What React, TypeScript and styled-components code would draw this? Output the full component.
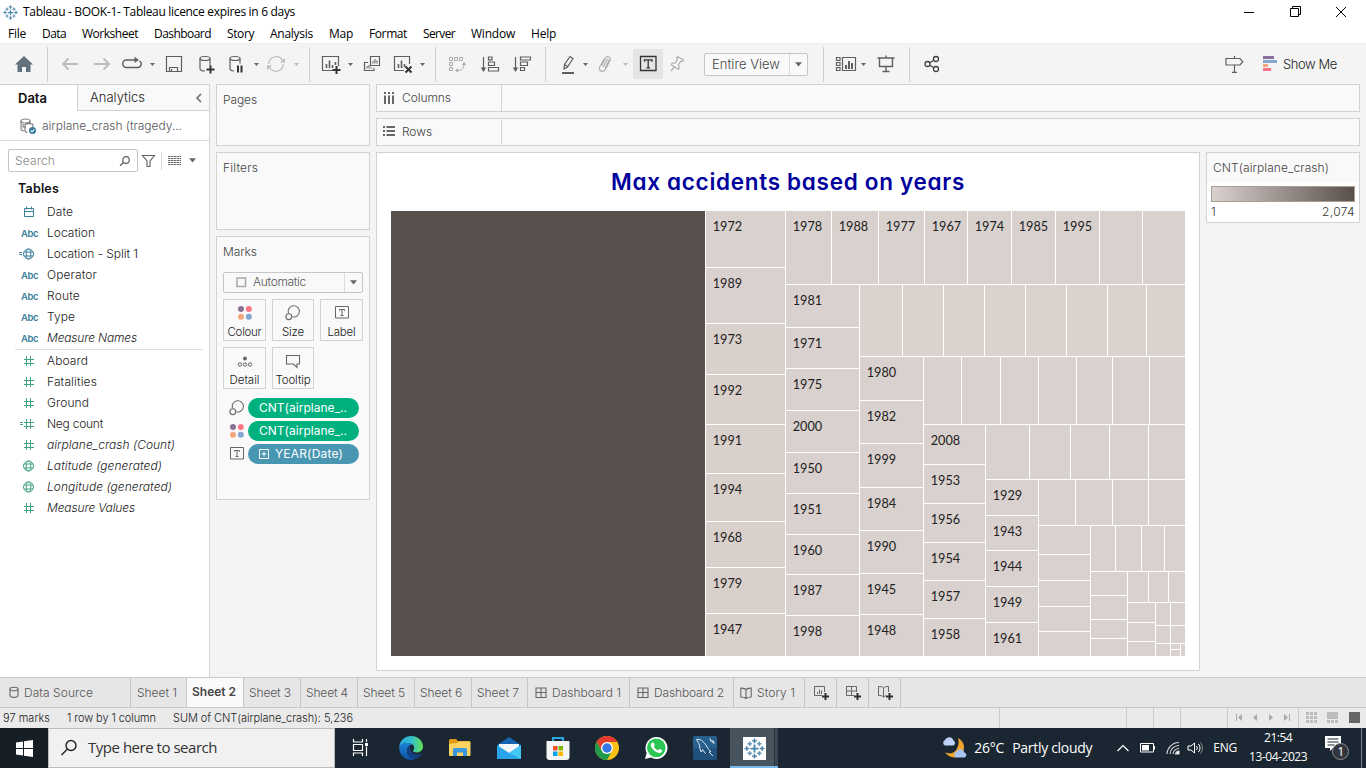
import React, { useLayoutEffect, useRef, useState } from "react";
import styled, { createGlobalStyle, css } from "styled-components";

const UI = `Inter, Roboto, "Liberation Sans", sans-serif`;
const SYS = `"Open Sans", "Noto Sans", sans-serif`;
const LINE = "#d2d2d2";

const Global = createGlobalStyle`
  * { box-sizing: border-box; }
  body { margin: 0; background: #f4f4f4; overflow: hidden; font-family: ${UI}; font-size: 12px; color: #333; }
  svg { display: block; flex: none; }
`;

/* ---------- text whose tracking is tuned so that it fills a given width ---------- */
const Label = styled.span<{ $size?: number; $color?: string; $weight?: number; $italic?: boolean; $sys?: boolean; $round?: boolean }>`
  display: inline-block;
  flex: none;
  white-space: pre;
  line-height: 1.3;
  font-family: ${(p) => (p.$sys ? SYS : UI)};
  font-size: ${(p) => p.$size ?? 12}px;
  color: ${(p) => p.$color ?? "#222"};
  font-weight: ${(p) => p.$weight ?? (p.$sys ? 400 : 300)};
  font-style: ${(p) => (p.$italic ? "italic" : "normal")};
  ${(p) => p.$round && css`font-feature-settings: "cv11";`}
`;

type FitProps = { w: number; children: string; size?: number; color?: string; weight?: number; italic?: boolean; sys?: boolean; round?: boolean };
function Fit({ w, children, size, color, weight, italic, sys, round }: FitProps) {
  const ref = useRef<HTMLSpanElement>(null);
  const [track, setTrack] = useState(0);
  useLayoutEffect(() => {
    const el = ref.current;
    if (!el) return;
    el.style.letterSpacing = "0px";
    setTrack((w - el.getBoundingClientRect().width) / children.length);
  }, [w, children]);
  return (
    <Label ref={ref} $size={size} $color={color} $weight={weight} $italic={italic} $sys={sys} $round={round} style={{ letterSpacing: `${track}px` }}>
      {children}
    </Label>
  );
}

/* ---------- frame ---------- */
const Screen = styled.div`width: 1366px; height: 768px; display: flex; flex-direction: column; overflow: hidden; background: #f4f4f4;`;
const TitleBar = styled.header`height: 23px; flex: none; background: #fff; display: flex; align-items: center; padding-left: 3px;`;
const AppName = styled.div`flex: 1; display: flex; align-items: center; gap: 5px; padding-top: 1px;`;
const WinButton = styled.div`width: 46px; height: 22px; display: flex; align-items: center; justify-content: center;`;
const MenuBar = styled.nav`height: 20px; flex: none; background: #fff; display: flex; align-items: center; gap: 16px; padding: 2px 0 0 8px;`;
const Toolbar = styled.div`height: 41px; flex: none; background: #f4f4f4; border-top: 1px solid #ededed; display: flex; align-items: center;`;
const Tool = styled.div<{ $w: number; $on?: boolean }>`
  width: ${(p) => p.$w}px; height: 30px; flex: none; display: flex; align-items: center; justify-content: center;
  background: ${(p) => (p.$on ? "#e5e5e5" : "transparent")};
`;
const Gap = styled.div<{ $w: number }>`width: ${(p) => p.$w}px; flex: none;`;
const Rule = styled.div`width: 1px; height: 35px; background: #d0d0d0; flex: none;`;
const Grow = styled.div`flex: 1;`;
const Select = styled.div<{ $w: number; $h: number; $drop: number; $pad: number }>`
  width: ${(p) => p.$w}px; height: ${(p) => p.$h}px; border: 1px solid #c6c6c6; border-radius: 2px; background: #f9f9f9;
  display: flex; align-items: center; padding-left: ${(p) => p.$pad}px; flex: none;
  & > :last-child { margin-left: auto; width: ${(p) => p.$drop}px; height: 100%; border-left: 1px solid #dcdcdc; display: flex; align-items: center; justify-content: center; }
`;
const ShowMe = styled.div`display: flex; align-items: center; gap: 6px; margin: 0 29px 0 16px;`;

const Main = styled.main`height: 593px; flex: none; display: flex;`;

/* ---------- data pane ---------- */
const DataPane = styled.aside`width: 210px; flex: none; background: #fff; border-right: 1px solid ${LINE}; border-top: 1px solid ${LINE};`;
const PaneTabs = styled.div`display: flex; height: 26px;`;
const DataTab = styled.div`width: 77px; padding-left: 18px; display: flex; align-items: center;`;
const AnalyticsTab = styled.div`flex: 1; background: #f9f9f9; border: solid ${LINE}; border-width: 0 0 1px 1px; padding: 0 6px 0 12px; display: flex; align-items: center; justify-content: space-between;`;
const Source = styled.div`height: 30px; border-bottom: 1px solid #dcdcdc; display: flex; align-items: center; padding-left: 18px; gap: 5px;`;
const SearchRow = styled.div`display: flex; align-items: center; height: 24px; margin-top: 8px; padding: 0 0 1px 8px;`;
const SearchBox = styled.div`width: 130px; height: 23px; border: 1px solid #c4c4c4; border-radius: 2px; display: flex; align-items: center; justify-content: space-between; padding: 0 6px;`;
const SearchRule = styled.div`width: 1px; height: 18px; background: #d6d6d6; margin: 0 6px 0 5px;`;
const Heading = styled.div`height: 28px; padding: 4px 0 0 18px; display: flex; align-items: center;`;
const Field = styled.div`height: 21px; display: flex; align-items: center; padding-left: 17px;`;
const FieldIcon = styled.div`width: 30px; height: 21px; display: flex; align-items: center; flex: none;`;
const Abc = styled.span`font: 600 9.5px ${UI}; color: #3d7f9c; padding: 1px 0 0 4px; letter-spacing: -0.4px;`;
const FieldRule = styled.div`height: 1px; margin: 1px 6px 0 15px; background: #dcdcdc;`;

/* ---------- cards ---------- */
const Cards = styled.section`width: 154px; margin-left: 6px; display: flex; flex-direction: column; gap: 6px;`;
const Card = styled.div<{ $h: number }>`height: ${(p) => p.$h}px; flex: none; background: #f9f9f9; border: 1px solid ${LINE}; padding: 7px 6px;`;
const MarkGrid = styled.div`display: grid; grid-template-columns: 43px 42px 43px; column-gap: 6px; row-gap: 6px; margin-top: 6px;`;
const MarkButton = styled.div`height: 42px; border: 1px solid ${LINE}; display: flex; flex-direction: column; align-items: center; justify-content: space-between; padding: 3px 0 0;`;
const MarksSelect = styled.div`margin-top: 12px;`;
const Slot = styled.div`width: 16px; height: 20px; flex: none; display: flex; align-items: center; justify-content: center;`;
const Pills = styled.div`display: flex; flex-direction: column; gap: 3px; margin-top: 9px;`;
const PillRow = styled.div`display: flex; align-items: center; height: 20px; padding-left: 6px; gap: 3px;`;
const Pill = styled.div<{ $c: string }>`width: 111px; height: 20px; border-radius: 10px; background: ${(p) => p.$c}; display: flex; align-items: center; padding-left: 11px; gap: 6px;`;

/* ---------- worksheet ---------- */
const Work = styled.section`width: 984px; margin-left: 6px; display: flex; flex-direction: column; gap: 6px;`;
const Shelf = styled.div`height: 28px; flex: none; border: 1px solid ${LINE}; background: #f9f9f9; display: flex;`;
const ShelfName = styled.div`width: 125px; border-right: 1px solid ${LINE}; display: flex; align-items: center; padding-left: 6px; gap: 6px;`;
const ViewRow = styled.div`display: flex; gap: 6px; align-items: flex-start;`;
const View = styled.div`width: 824px; height: 519px; background: #fff; border: 1px solid ${LINE}; padding-left: 14px;`;
const ViewTitle = styled.div`height: 58px; width: 794px; display: flex; align-items: center; justify-content: center;`;
const Legend = styled.div`width: 154px; height: 71px; border: 1px solid ${LINE}; background: #fff;`;
const LegendName = styled.div`height: 29px; background: #f9f9f9; display: flex; align-items: center; padding-left: 6px;`;
const Ramp = styled.div`height: 16px; margin: 4px 4px 0; border: 1px solid #a8a095; background: linear-gradient(90deg, #dad2cf, #594f4b);`;
const RampEnds = styled.div`display: flex; justify-content: space-between; padding: 2px 4px 0;`;

/* ---------- bottom ---------- */
const SheetTabs = styled.div`height: 31px; flex: none; border: solid #cacaca; border-width: 1px 0; background: #e6e6e6; display: flex;`;
const SheetTab = styled.div<{ $w: number; $on?: boolean; $pad: number }>`
  width: ${(p) => p.$w}px; flex: none; border-right: 1px solid #c6c6c6; padding-left: ${(p) => p.$pad}px; display: flex; align-items: center; gap: 5px;
  background: ${(p) => (p.$on ? "#fafafa" : "transparent")}; padding-bottom: ${(p) => (p.$on ? 2 : 0)}px;
`;
const Status = styled.div`height: 20px; flex: none; background: #eaeaea; display: flex; align-items: center; padding-left: 3px; gap: 17px;`;
const StatusCell = styled.div<{ $w: number }>`width: ${(p) => p.$w}px; height: 20px; border-left: 1px solid #cbcbcb; display: flex; align-items: center; justify-content: center; gap: 6px; padding-bottom: 1px;`;
const StatusCells = styled.div`margin-left: auto; display: flex;`;
const Taskbar = styled.footer`height: 40px; flex: none; background: #1a2631; display: flex; align-items: center; color: #fff;`;
const Task = styled.div<{ $w: number; $on?: boolean; $dark?: boolean }>`
  width: ${(p) => p.$w}px; height: 40px; flex: none; display: flex; align-items: center; justify-content: center;
  background: ${(p) => (p.$on ? "linear-gradient(90deg,#47535d 44px,#28343d 44px,#28343d 45px,#3b4750 45px)" : p.$dark ? "#161e26" : "transparent")};
  ${(p) => p.$on && css`border-bottom: 2px solid #76b9ed; padding-top: 2px;`}
`;
const TaskSearch = styled.div`width: 288px; height: 40px; background: #f1f1f1; border: 1px solid #bcbcbc; display: flex; align-items: center; padding-left: 11px; gap: 10px;`;
const Clock = styled.div`width: 66px; height: 40px; display: flex; flex-direction: column; align-items: center; justify-content: center; gap: 3px; padding-bottom: 1px;`;
const Peek = styled.div`width: 1px; height: 40px; background: #77818a; margin: 0 4px 0 8px;`;
const Tile = styled.div`width: 23px; height: 23px; background: #fff; display: flex; align-items: center; justify-content: center;`;

/* ---------- icons ---------- */
type IconProps = { s?: number; h?: number; c?: string; sw?: number; children: React.ReactNode };
const Icon = ({ s = 24, h, c = "#5f5f5f", sw = 1.2, children }: IconProps) => (
  <svg width={s} height={h ?? s} viewBox={`0 0 ${s} ${h ?? s}`} fill="none" stroke={c} strokeWidth={sw}>{children}</svg>
);
const Caret = ({ w, c = "#666" }: { w: number; c?: string }) => (
  <Tool $w={w}><svg width="5" height="3"><path d="M0 0h5L2.5 3z" fill={c} /></svg></Tool>
);
const BigCaret = () => <svg width="7" height="5"><path d="M0 .3h7L3.5 4.6z" fill="#666" /></svg>;

const TableauMark = ({ s, c = "#35749c" }: { s: number; c?: string }) => (
  <svg width={s} height={s} viewBox="0 0 24 24" stroke={c} strokeWidth="1.8">
    <path d="M12 7.500v9M7.500 12h9" stroke="#3f87ae" strokeWidth="2" />
    <path d="M12 .5v5.500M9.300 3.200h5.400M12 18v5.500M9.300 20.800h5.400M3.200 9.300v5.400M.5 12h5.500M20.800 9.300v5.400M18 12h5.500" opacity=".85" />
    <path d="M6.500 4v5M4 6.500h5M17.500 4v5M15 6.500h5M6.500 15v5M4 17.500h5M17.500 15v5M15 17.500h5" opacity=".75" />
  </svg>
);
const Dots = () => (
  <svg width="16" height="16">
    <circle cx="4" cy="4" r="3" fill="#8b7397" /><circle cx="11.800" cy="4" r="3" fill="#f87886" />
    <circle cx="4" cy="11.800" r="3" fill="#f3a77c" /><circle cx="11.800" cy="11.800" r="3" fill="#84a7cf" />
  </svg>
);
const SizeIcon = () => (
  <Icon s={16} c="#6a6a6a" sw={1.1}><path d="M3.600 8.300A5.600 5.600 0 1 1 7.200 11.700" /><circle cx="3.800" cy="11.700" r="2.900" /></Icon>
);
const TextIcon = () => (
  <Icon s={14} h={13} c="#666" sw={1}><path d="M.5.5h13v11.500h-13z" /><path d="M4.500 4.800V3.500h5v1.300M7 3.500v6M5.500 9.500h3" /></Icon>
);
const Globe = ({ c, calc }: { c: string; calc?: boolean }) => (
  <Icon s={18} h={14} c={c} sw={1}>
    {calc && <path d="M2 5.500h3M2 7.500h3" />}
    <circle cx="11.500" cy="7" r="5" /><ellipse cx="11.500" cy="7" rx="2.300" ry="5" /><path d="M7 5h9M7 9h9" />
  </Icon>
);
const Hash = ({ calc }: { calc?: boolean }) => (
  <Icon s={18} h={14} c="#43a383" sw={1}>
    {calc && <path d="M3 5.500h3M3 7.500h3" />}
    <path d="M9.500 2v10M13.500 2v10M7 5.500h10M7 9.500h10" />
  </Icon>
);
const Calendar = () => <Icon s={18} h={14} c="#3d7f9c" sw={1}><path d="M7.500 3.500h9v8h-9zM7.500 6.500h9M9.500 1.500v3M14.500 1.500v3" /></Icon>;
const Plus = ({ x, y, r = 4 }: { x: number; y: number; r?: number }) => <path d={`M${x - r} ${y}h${2 * r}M${x} ${y - r}v${2 * r}`} stroke="#333" strokeWidth="2" />;
const DashIcon = () => <Icon s={12} c="#666" sw={1.1}><path d="M1 1h10v9.500H1zM6 1v9.500M1 5.500h10" /></Icon>;
const StoryIcon = () => <Icon s={12} c="#666" sw={1.1}><path d="M6 2.500C4.500 1 3 1.200.8 1v9C3 10 4.500 10 6 11.500C7.500 10 9 10 11.200 10V1C9 1.200 7.500 1 6 2.500zM6 2.500v9" /></Icon>;

/* ---------- tree map ---------- */
type Cell = { x0: number; y0: number; x1: number; y1: number; year?: string; tone: string };
const RIGHT = 794, BOTTOM = 445;
const cells: Cell[] = [{ x0: 0, y0: 0, x1: 314, y1: BOTTOM, tone: "#594f4c" }];
const column = (x0: number, x1: number, y0: number, cuts: number[], years: string[] = []) => {
  const ends = [...cuts, BOTTOM];
  ends.forEach((y1, i) => cells.push({ x0, x1, y0: i ? ends[i - 1] + 1 : y0, y1, year: years[i], tone: x0 < 390 && i > 1 ? "#d9d0cb" : "#d9d1ce" }));
};
const strip = (y0: number, y1: number, x0: number, cuts: number[], years: string[] = [], tone = "#d9d1ce") => {
  const ends = [...cuts, RIGHT];
  ends.forEach((x1, i) => cells.push({ x0: i ? ends[i - 1] + 1 : x0, x1, y0, y1, year: years[i], tone }));
};
column(315, 394, 0, [56, 112, 163, 213, 262, 310, 356, 402], ["1972", "1989", "1973", "1992", "1991", "1994", "1968", "1979", "1947"]);
strip(0, 73, 395, [440, 487, 533, 576, 620, 664, 708, 751], ["1978", "1988", "1977", "1967", "1974", "1985", "1995"]);
column(395, 468, 74, [116, 157, 199, 241, 282, 323, 363, 404], ["1981", "1971", "1975", "2000", "1950", "1951", "1960", "1987", "1998"]);
strip(74, 145, 469, [511, 552, 593, 634, 675, 716, 755], [], "#dad2cd");
column(469, 532, 146, [189, 232, 276, 319, 362, 403], ["1980", "1982", "1999", "1984", "1990", "1945", "1948"]);
strip(146, 213, 533, [570, 609, 647, 685, 721, 758]);
column(533, 594, 214, [253, 292, 331, 369, 407], ["2008", "1953", "1956", "1954", "1957", "1958"]);
strip(214, 268, 595, [638, 679, 718, 757]);
column(595, 647, 269, [304, 339, 375, 411], ["1929", "1943", "1944", "1949", "1961"]);
strip(269, 314, 648, [684, 721, 757]);
column(648, 699, 315, [343, 369, 395, 420]);
strip(315, 360, 700, [724, 750, 773]);
column(700, 736, 361, [384, 408, 427]);
strip(361, 391, 737, [757, 777]);
column(737, 764, 392, [411, 430]);
strip(392, 414, 765, [779]);
strip(415, 432, 765, [779]);
strip(433, BOTTOM, 765, [779, 789]);

const TreeMap = () => (
  <svg width={RIGHT} height={BOTTOM} fontFamily="Lato, sans-serif" fontSize="12.7">
    {cells.map((c, i) => <rect key={i} x={c.x0} y={c.y0} width={c.x1 - c.x0} height={c.y1 - c.y0} fill={c.tone} />)}
    <path d="M780 438.500h9" stroke="#fff" />
    {cells.filter((c) => c.year).map((c) => <text key={c.year} x={c.x0 + 6.700} y={c.y0 + 20.400} fill="#222">{c.year}</text>)}
  </svg>
);

/* ---------- content ---------- */
const menus: [string, number][] = [["File", 18], ["Data", 24], ["Worksheet", 56], ["Dashboard", 57], ["Story", 27], ["Analysis", 43], ["Map", 24], ["Format", 38], ["Server", 32], ["Window", 44], ["Help", 25]];
const abc = <Abc>Abc</Abc>;
const dims: [React.ReactNode, string, number, boolean?][] = [
  [<Calendar />, "Date", 26], [abc, "Location", 48], [<Globe c="#3d7f9c" calc />, "Location - Split 1", 91], [abc, "Operator", 50],
  [abc, "Route", 33], [abc, "Type", 28], [abc, "Measure Names", 90, true],
];
const measures: [React.ReactNode, string, number, boolean?][] = [
  [<Hash />, "Aboard", 41], [<Hash />, "Fatalities", 50], [<Hash />, "Ground", 42], [<Hash calc />, "Neg count", 56],
  [<Hash />, "airplane_crash (Count)", 128, true], [<Globe c="#43a383" />, "Latitude (generated)", 115, true],
  [<Globe c="#43a383" />, "Longitude (generated)", 125, true], [<Hash />, "Measure Values", 88, true],
];
const FieldList = ({ items }: { items: typeof dims }) => (
  <>{items.map(([icon, name, w, it]) => <Field key={name}><FieldIcon>{icon}</FieldIcon><Fit w={w} italic={it}>{name}</Fit></Field>)}</>
);

const Tools = () => (
  <Toolbar>
    <Tool $w={47}><svg width="18" height="16"><path d="M9 0L18 8.500H15.500V16H11V11H7V16H2.500V8.500H0z" fill="#63717f" /></svg></Tool>
    <Rule /><Gap $w={6} />
    <Tool $w={32}><Icon c="#bbb" sw={1.8}><path d="M20 12H5M10.500 6.500L5 12l5.500 5.500" /></Icon></Tool>
    <Tool $w={32}><Icon c="#bbb" sw={1.8}><path d="M4 12h15M13.500 6.500L19 12l-5.500 5.500" /></Icon></Tool>
    <Tool $w={28}><Icon sw={1.4}><path d="M16 8H6.500a3.500 3.500 0 0 0 0 7.500h11a3.500 3.500 0 0 0 2-6.500" /><path d="M14.500 4.800L19 8l-4.500 3z" fill="#5f5f5f" stroke="none" /></Icon></Tool>
    <Caret w={12} />
    <Tool $w={32}><Icon><path d="M4.500 4.500h15v15h-15zM7.500 19.500v-4h8v4M9.500 19v-2" /></Icon></Tool>
    <Tool $w={32}><Icon><ellipse cx="11" cy="6.500" rx="5" ry="2" /><path d="M6 6.500v10c0 1.500 2 2.500 5 2.500M16 6.500v7" /><Plus x={16.500} y={17.500} /></Icon></Tool>
    <Tool $w={28}><Icon><ellipse cx="11" cy="6.500" rx="5" ry="2" /><path d="M6 6.500v10c0 1.500 1.500 2.300 4 2.500M16 6.500v5" /><path d="M14 13.500v7M17.500 13.500v7" stroke="#333" strokeWidth="2" /></Icon></Tool>
    <Caret w={12} />
    <Tool $w={28}><Icon c="#bbb"><path d="M4.800 12a7.200 7.200 0 0 1 13.500-3.500M19.200 12a7.200 7.200 0 0 1-13.500 3.500" /><path d="M21 6v4.500h-5zM3 18v-4.500h5z" fill="#bbb" stroke="none" /></Icon></Tool>
    <Caret w={12} c="#bbb" />
    <Gap $w={7} /><Rule /><Gap $w={7} />
    <Tool $w={27}><Icon><path d="M14 18.500H3.500v-14h16V14" /><path d="M7.500 16v-4M10.500 16V8.500M13.500 16v-3M16.500 13v-3" strokeWidth="1.600" /><Plus x={17.500} y={18} /></Icon></Tool>
    <Caret w={12} />
    <Tool $w={31}><Icon><path d="M10.500 4.500h9v9h-9zM8 10.500H4.500v8h9.500V16" /><path d="M13 11.500V9M15 11.500V7M17 11.500V8.500M7 16.500v-2.500M9 16.500v-3.500M11 16.500V15" strokeWidth="1" /></Icon></Tool>
    <Tool $w={31}><Icon><path d="M13 18.500H3.500v-14h15V12" /><path d="M7.500 16v-4M10.500 16V8.500M13.500 15v-3" strokeWidth="1.600" /><path d="M14.500 14.500l6 6M20.500 14.500l-6 6" stroke="#333" strokeWidth="2" /></Icon></Tool>
    <Caret w={9} />
    <Gap $w={8} /><Rule /><Gap $w={5} />
    <Tool $w={32}><Icon c="#aaa" sw={1}><path d="M4.500 5.500h3v3h-3zM9.500 5.500h3v3h-3zM14.500 5.500h3v3h-3zM4.500 10.500h3v3h-3zM4.500 15.500h3v3h-3z" /><path d="M19 11.500c0 5-2 7-6.500 7" /><path d="M16.800 13l2.200-3 2.200 3zM13 16.300L10 18.500l3 2.200z" fill="#aaa" stroke="none" /></Icon></Tool>
    <Tool $w={33}><Icon><path d="M5.500 5v12" /><path d="M2.800 15.500h5.400L5.500 20z" fill="#5f5f5f" stroke="none" /><path d="M10.500 5h3.500v2.800h-3.500zM10.500 10h6v3.500h-6zM10.500 15.500h10v3.500h-10z" /></Icon></Tool>
    <Tool $w={32}><Icon><path d="M5.500 5v12" /><path d="M2.800 15.500h5.400L5.500 20z" fill="#5f5f5f" stroke="none" /><path d="M10.500 5h10v3h-10zM10.500 10h7v3.500h-7zM10.500 15.500h4v3h-4z" /></Icon></Tool>
    <Gap $w={7} /><Rule /><Gap $w={8} />
    <Tool $w={28}><Icon><path d="M8 17l.5-4.500 5.500-8 3 2L11.500 15zM8.500 12.500l3 2" /><path d="M6 21h12" strokeWidth="2" /></Icon></Tool>
    <Caret w={7} />
    <Tool $w={32}><Icon c="#b0b0b0"><path d="M8.500 13.500l4-7.500a2.600 2.600 0 0 1 4.600 2.400l-5 9.300a3 3 0 0 1-5.300-2.900l4.700-8.300M12 16l3.500-6.800a1 1 0 0 0-1.900-1L10 15" /></Icon></Tool>
    <Caret w={8} c="#bbb" />
    <Gap $w={4} />
    <Tool $w={30} $on><Icon c="#333" sw={1.3}><path d="M4.500 4.500h15.500v14h-15.500z" /><path d="M8.500 9.800V7.800h7.500v2M12.200 7.800v8M10.500 15.800h3.500" /></Icon></Tool>
    <Tool $w={28}><Icon c="#b0b0b0"><path d="M12.500 4.500l6 3.500-.8 1.500-1.700-.3-2.500 3.300.8 3.500-1.100 1.200-7-4.500.8-1.500 3.300-.3 2.200-3.400-.8-1.500zM9.300 15L6 19" /></Icon></Tool>
    <Gap $w={13} />
    <Select $w={104} $h={23} $drop={18} $pad={7}><Fit w={68} size={13} color="#444">Entire View</Fit><div><BigCaret /></div></Select>
    <Gap $w={15} /><Rule /><Gap $w={8} />
    <Tool $w={28}><Icon><path d="M2.500 5.500h3.500v3h-3.500zM2.500 10.500h3.500v3h-3.500zM2.500 15.500h3.500v3h-3.500zM8.500 5.500h13v13h-13z" /><path d="M12 17v-4M15 17V9M18 17v-6" strokeWidth="2" /></Icon></Tool>
    <Caret w={7} />
    <Tool $w={37}><Icon><path d="M3.500 6h17M5.500 6v8.500h13V6M12 3.500V6M12 14.500V19M8.500 19.500h7" strokeWidth="1.400" /></Icon></Tool>
    <Gap $w={5} /><Rule /><Gap $w={6} />
    <Tool $w={32}><Icon c="#444" sw={1.3}><circle cx="7.500" cy="12" r="2.500" /><circle cx="16" cy="7" r="2.500" /><circle cx="16" cy="17" r="2.500" /><path d="M9.700 10.700l4.100-2.400M9.700 13.300l4.100 2.400" /></Icon></Tool>
    <Grow />
    <Icon><path d="M3 6.500h14l2.800 3.200-2.800 3.300H3zM11.500 4v2.500M11.500 13v7M9 20.300h5" /></Icon>
    <ShowMe>
      <svg width="14" height="15"><path d="M0 0h11v3H0z" fill="#86729a" /><path d="M0 4h14v3H0z" fill="#84a7cf" /><path d="M0 8h5v3H0z" fill="#f3a77c" /><path d="M0 12h8v3H0z" fill="#f87080" /></svg>
      <Fit w={54} size={13}>Show Me</Fit>
    </ShowMe>
  </Toolbar>
);

const Pane = () => (
  <DataPane>
    <PaneTabs>
      <DataTab><Fit w={29} size={13} weight={600} color="#111">Data</Fit></DataTab>
      <AnalyticsTab><Fit w={55} size={13}>Analytics</Fit><Icon s={8} h={10} sw={1.4}><path d="M6 1L2 5l4 4" /></Icon></AnalyticsTab>
    </PaneTabs>
    <Source>
      <Icon s={19} h={18} c="#777" sw={1.1}>
        <ellipse cx="7.500" cy="4" rx="4.500" ry="2" /><path d="M3 4v8c0 1 1.500 2 3 2M5 7v3h3M12 4v2M7 8.500c0-2.500 8-2.500 8 0v2M7 8.500v5c0 1 1 1.800 2.500 2" />
        <circle cx="14.500" cy="13.500" r="3.500" fill="#35789b" stroke="none" /><path d="M12.800 13.500l1.300 1.300 2.200-2.500" stroke="#fff" />
      </Icon>
      <Fit w={140} color="#555">airplane_crash (tragedy...</Fit>
    </Source>
    <SearchRow>
      <SearchBox><Fit w={40} color="#888">Search</Fit><Icon s={12} sw={1.2}><circle cx="7" cy="5" r="3.300" /><path d="M4.700 7.300L1 10.800" /></Icon></SearchBox>
      <Gap $w={3} />
      <Icon s={15} h={14} sw={1.1}><path d="M1.500 1.500h12L9 7v5.500H6V7z" /></Icon>
      <SearchRule />
      <Icon s={13} h={12} c="#666" sw={1}><path d="M0 1.500h13M0 3.500h13M0 5.500h13M0 7.500h13M0 9.500h13" strokeDasharray="2.500 .5" /></Icon>
      <Gap $w={8} /><BigCaret />
    </SearchRow>
    <Heading><Fit w={41} size={12.5} weight={600} color="#111">Tables</Fit></Heading>
    <FieldList items={dims} />
    <FieldRule />
    <FieldList items={measures} />
  </DataPane>
);

const MarksCard = () => (
  <Card $h={264}>
    <Fit w={34} color="#444">Marks</Fit>
    <MarksSelect>
      <Select $w={140} $h={21} $drop={18} $pad={12}>
        <Icon s={11} c="#aaa" sw={1.6}><path d="M1 1h8.500v8.500h-8.500z" /></Icon><Gap $w={6} />
        <Fit w={53} color="#555">Automatic</Fit><div><BigCaret /></div>
      </Select>
    </MarksSelect>
    <MarkGrid>
      <MarkButton><Slot><Dots /></Slot><Fit w={34} size={11.5}>Colour</Fit></MarkButton>
      <MarkButton><Slot><SizeIcon /></Slot><Fit w={22} size={11.500}>Size</Fit></MarkButton>
      <MarkButton><Slot><TextIcon /></Slot><Fit w={28} size={11.500}>Label</Fit></MarkButton>
      <MarkButton><Slot><Icon s={16} c="#666" sw={1}><circle cx="8" cy="5.500" r="2" fill="#666" stroke="none" /><circle cx="3" cy="11.500" r="1.700" /><circle cx="8" cy="11.500" r="1.700" /><circle cx="13" cy="11.500" r="1.700" /></Icon></Slot><Fit w={30} size={11.500}>Detail</Fit></MarkButton>
      <MarkButton><Slot><Icon s={16} c="#666" sw={1.1}><path d="M1.500 2.500h13v8.500h-2.500v3.500L8.500 11h-7z" /></Icon></Slot><Fit w={35} size={11.500}>Tooltip</Fit></MarkButton>
    </MarkGrid>
    <Pills>
      <PillRow><Slot><SizeIcon /></Slot><Pill $c="#00b180"><Fit w={88} weight={400} color="#fff">CNT(airplane_..</Fit></Pill></PillRow>
      <PillRow><Slot><Dots /></Slot><Pill $c="#00b180"><Fit w={88} weight={400} color="#fff">CNT(airplane_..</Fit></Pill></PillRow>
      <PillRow><Slot><TextIcon /></Slot><Pill $c="#4996b2"><Icon s={10} c="#fff" sw={1}><path d="M.5.5h9v9h-9zM5 2.500v5M2.500 5h5" /></Icon><Fit w={68} weight={400} color="#fff">YEAR(Date)</Fit></Pill></PillRow>
    </Pills>
  </Card>
);

const ViewArea = () => (
  <Work>
    <Shelf><ShelfName><Icon s={13} h={14} c="#666" sw={2}><path d="M2 1v2M6 1v2M10 1v2M2 4.500V13M6 4.500V13M10 4.500V13" /></Icon><Fit w={49} color="#444">Columns</Fit></ShelfName></Shelf>
    <Shelf><ShelfName><Icon s={13} h={12} c="#666" sw={2}><path d="M0 1h2M0 5h2M0 9h2M3.500 1H12M3.500 5H12M3.500 9H12" /></Icon><Fit w={30} color="#444">Rows</Fit></ShelfName></Shelf>
    <ViewRow>
      <View>
        <ViewTitle><Fit w={354} size={22.5} weight={600} color="#00009c" round>Max accidents based on years</Fit></ViewTitle>
        <TreeMap />
      </View>
      <Legend>
        <LegendName><Fit w={116} color="#444">CNT(airplane_crash)</Fit></LegendName>
        <Ramp />
        <RampEnds><Fit w={7} color="#333">1</Fit><Fit w={33} color="#333">2,074</Fit></RampEnds>
      </Legend>
    </ViewRow>
  </Work>
);

const Tabs = () => (
  <SheetTabs>
    <SheetTab $w={131} $pad={9}><Icon s={10} h={13} c="#666" sw={1.1}><ellipse cx="5" cy="3" rx="4" ry="1.800" /><path d="M1 3v6.500C1 12 9 12 9 9.500V3" /></Icon><Fit w={69} color="#555">Data Source</Fit></SheetTab>
    <SheetTab $w={56} $pad={6}><Fit w={40} color="#555">Sheet 1</Fit></SheetTab>
    <SheetTab $w={57} $pad={5} $on><Fit w={44} weight={600} color="#444">Sheet 2</Fit></SheetTab>
    {[3, 4, 5, 6, 7].map((n) => <SheetTab key={n} $w={n === 7 ? 56 : 57} $pad={5}><Fit w={42} color="#555">{`Sheet ${n}`}</Fit></SheetTab>)}
    <SheetTab $w={102} $pad={7}><DashIcon /><Fit w={69} color="#555">Dashboard 1</Fit></SheetTab>
    <SheetTab $w={104} $pad={7}><DashIcon /><Fit w={70} color="#555">Dashboard 2</Fit></SheetTab>
    <SheetTab $w={71} $pad={6}><StoryIcon /><Fit w={38} color="#555">Story 1</Fit></SheetTab>
    <SheetTab $w={32} $pad={8}><Icon s={18} h={16} c="#666" sw={1}><path d="M11.500 1.500h-10v9H9M11.500 1.500V7M4.500 9V7M6.500 9V4.500M8.500 9V5.500" /><Plus x={12.500} y={11.500} r={3.500} /></Icon></SheetTab>
    <SheetTab $w={32} $pad={8}><Icon s={18} h={16} c="#666" sw={1}><path d="M11.500 7V1.500h-10v9H9M1.500 6h10M6.500 1.500v9" /><Plus x={12.500} y={11.500} r={3.500} /></Icon></SheetTab>
    <SheetTab $w={32} $pad={8}><Icon s={18} h={16} c="#666" sw={1}><path d="M6.500 3C5 1.500 3.500 1.500 1.500 1.500v9c2 0 3.500 0 5 1.500zM6.500 3C8 1.500 9.500 1.500 11.500 1.500V7M6.500 12l2.500-1.500" /><Plus x={12.500} y={11.500} r={3.500} /></Icon></SheetTab>
  </SheetTabs>
);

const StatusBar = () => (
  <Status>
    <Fit w={47} size={11}>97 marks</Fit><Fit w={89} size={11}>1 row by 1 column</Fit><Fit w={180} size={11}>SUM of CNT(airplane_crash): 5,236</Fit>
    <StatusCells>
      <StatusCell $w={127} /><StatusCell $w={27} /><StatusCell $w={27} /><StatusCell $w={47} />
      <StatusCell $w={71}>
        <svg width="54" height="7" fill="#aaa"><path d="M0 0h1v7H0zM6 0v7L2 3.500zM21 0v7L17 3.500zM33 0v7l4-3.500zM48 0v7l4-3.500zM53 0h1v7h-1z" /></svg>
      </StatusCell>
      <StatusCell $w={68}>
        <svg width="54" height="11"><path d="M0 1.500h11M0 5.500h11M0 9.500h11" stroke="#bcbcbc" strokeWidth="3" strokeDasharray="3 1" /><path d="M21 0h11v7H21zM21 8h3v3h-3zM25 8h3v3h-3zM29 8h3v3h-3z" fill="#bcbcbc" /><path d="M43 0h11v11H43z" fill="#666" /></svg>
      </StatusCell>
    </StatusCells>
  </Status>
);

const Edge = () => (
  <svg width="24" height="24" viewBox="0 0 24 24">
    <defs>
      <linearGradient id="e1" x1="0" x2="1"><stop offset="0" stopColor="#2aa6e6" /><stop offset=".55" stopColor="#35c1c8" /><stop offset="1" stopColor="#66e052" /></linearGradient>
      <linearGradient id="e2" x1="0" x2="0" y2="1"><stop offset="0" stopColor="#1a84d8" /><stop offset="1" stopColor="#0f4f9e" /></linearGradient>
    </defs>
    <path d="M.2 11C1 4 6 0 12 0c7 0 12 5 12 10.500 0 4-3.500 6-6.500 6-2 0-3.500-.8-3.500-1.500 0-.6 1.200-1.300 1.200-3.200C15.200 9 12 7 8.500 7 4.500 7 1.500 8.800.2 11z" fill="url(#e1)" />
    <path d="M.2 11C1.500 8.500 5 7 8.500 7c1.800 0 3.500.5 4.700 1.400C10 8.500 8 11.500 8 14.500c0 4.500 4 8 8.500 8-1.300 1-3 1.500-4.500 1.500C5 24 0 18.500.2 11z" fill="url(#e2)" />
    <path d="M8 14.500c0-2.200 1-4.300 3-5.300-.8 4.800 2.500 9.300 7.500 9.300 1.500 0 2.800-.4 4-1 .4-.2.700.1.400.5-1.500 2.500-3.800 4.300-6.400 4.500C12 22.500 8 19 8 14.500z" fill="#123f80" />
  </svg>
);

const Windows = () => (
  <Taskbar>
    <Task $w={48} $dark><svg width="17" height="17"><path d="M0 2.500L7 1.500V8H0zM8 1.300L17 0v8H8zM0 9h7v6.500L0 14.500zM8 9h9v8l-9-1.300z" fill="#fff" /></svg></Task>
    <TaskSearch><Icon s={18} c="#222" sw={1.4}><circle cx="11" cy="6.500" r="5" /><path d="M7.300 10.200L1.500 16" /></Icon><Fit w={129} size={15} sys color="#333">Type here to search</Fit></TaskSearch>
    <Task $w={50}><Icon s={18} c="#fff" sw={1.2}><path d="M2.500 0v3h9V0M2.500 5.500h9v6h-9zM2.500 17v-3h9v3M15.500 0v3M15.500 7.500V17" /><path d="M14 4h3v3h-3z" fill="#fff" stroke="none" /></Icon></Task>
    <Task $w={51}><Edge /></Task>
    <Task $w={48}><svg width="22" height="20"><path d="M0 2.500Q0 1 1.500 1H7l2 2h12v3H0z" fill="#e29c12" /><path d="M0 6L8 5l2-1.500h10.500q1 0 1 1V17q0 1-1 1H1q-1 0-1-1z" fill="#fdd462" /><path d="M4 18v-6.500q0-1.500 1.500-1.500h11q1.500 0 1.500 1.500V18h-4v-3.500H8V18z" fill="#3a96dd" /></svg></Task>
    <Task $w={50}><svg width="24" height="22"><path d="M0 8L12 0l12 8v14H0z" fill="#1565b0" /><path d="M2 7h20v6l-10 5L2 13z" fill="#f4f8fc" /><path d="M0 8l12 8 12-8v14H0z" fill="#2aa4ea" /><path d="M12 16L24 8v14z" fill="#46c8f5" /></svg></Task>
    <Task $w={48}><svg width="24" height="24"><path d="M7 6V2h10v4" fill="none" stroke="#29a8e0" strokeWidth="2" /><path d="M.5 5h23v16q0 3-3 3h-17q-3 0-3-3z" fill="#f5f5f5" /><path d="M7 10h4.500v4.500H7z" fill="#f05022" /><path d="M12.500 10H17v4.500h-4.500z" fill="#7fba00" /><path d="M7 15.500h4.500V20H7z" fill="#01a3ee" /><path d="M12.500 15.500H17V20h-4.500z" fill="#ffb800" /></svg></Task>
    <Task $w={50}><svg width="24" height="24"><circle cx="12" cy="12" r="12" fill="#fbc116" /><path d="M1.600 6A12 12 0 0 1 22.400 6H12L7 15z" fill="#e33b2e" /><path d="M1.600 6A12 12 0 0 0 12 24l5-9-5 3-5-3z" fill="#229a4a" /><circle cx="12" cy="12" r="6" fill="#fff" /><circle cx="12" cy="12" r="4.700" fill="#3577e5" /></svg></Task>
    <Task $w={48}><svg width="24" height="24"><path d="M1 23l1.700-6A11 11 0 1 1 7 21.500z" fill="#fff" /><circle cx="12.300" cy="11.800" r="9.300" fill="#2bc553" /><path d="M8.500 6.500c1.500-.6 1.800 1.500 2.200 2.300.3.700-1 1.500-.7 2 1 1.800 2.300 2.800 4 3.500.6.200 1.200-1.500 1.800-1.300 1 .4 2.600 1 2.400 1.800-.4 2-2.500 2.500-4 2C10.500 15.500 8.500 13.500 7 10.500c-.8-1.800.3-3.600 1.500-4z" fill="#fff" /></svg></Task>
    <Task $w={50}><svg width="24" height="24"><rect width="24" height="24" rx="2" fill="#275f8e" /><path d="M0 12h24v12H0z" fill="#1d4670" opacity=".6" /><path d="M3.500 3.500c3-1 7 1.500 10 6.500 2 3 2 4 4.500 5.500l-2 .5 4 4M3.500 3.500c1 2 2.500 3.500 3 6s.5 6 2 6.500l1-2.500 3 4" fill="none" stroke="#e4edf4" /><path d="M17 2.500l1 2.500 3 .5M18.500 5l3 2.500" stroke="#cfdde8" strokeWidth="1.300" fill="none" /></svg></Task>
    <Task $w={48} $on><Tile><TableauMark s={21} /></Tile></Task>
    <Gap $w={164} />
    <svg width="26" height="24"><path d="M16 2c6 3 8 10 4 15.500S7 23 3 16c5 3 10 1 12-3.500S17 5 16 2z" fill="#f0a52c" /><path d="M3 9.500a3 3 0 0 1 0-5.500 4.500 4.500 0 0 1 8.500.5 2.800 2.800 0 0 1 0 5z" fill="#bdd2f6" /><path d="M14 21.500a3 3 0 0 1 0-5.500 4.500 4.500 0 0 1 8.500.5 2.600 2.600 0 0 1 0 5z" fill="#a9c4f2" /></svg>
    <Gap $w={6} />
    <Fit w={30} size={14} sys color="#fff">26°C</Fit><Gap $w={8} /><Fit w={80} size={14} sys color="#fff">Partly cloudy</Fit>
    <Gap $w={25} /><Icon s={12} h={8} c="#fff"><path d="M.5 7L6 1.500 11.500 7" /></Icon>
    <Gap $w={11} /><Icon s={16} h={10} c="#fff" sw={1}><path d="M.5.5h13v8.500H.5zM14.500 3v3.500" /><path d="M2 2h7v5.500H2z" fill="#fff" stroke="none" /></Icon>
    <Gap $w={10} /><Icon s={14} h={14} c="#ddd" sw={1.1}><path d="M1 13A12 12 0 0 1 13 1.500M4 13a9 9 0 0 1 9-8.500M7 13a6 6 0 0 1 6-5.500" /><path d="M9.500 13A4 4 0 0 1 13 10v3z" fill="#fff" /></Icon>
    <Gap $w={7} /><Icon s={17} h={14} c="#fff" sw={1}><path d="M1 5h3l3.500-3v10L4 9H1zM9.500 5a3 3 0 0 1 0 4M11.500 3a6 6 0 0 1 0 8" /><path d="M13.500 1.500a8.500 8.500 0 0 1 0 11" stroke="#888" /></Icon>
    <Gap $w={9} /><Fit w={24} size={12} sys color="#fff">ENG</Fit>
    <Gap $w={8} />
    <Clock><Fit w={28} size={12} sys color="#fff">21:54</Fit><Fit w={58} size={12} sys color="#fff">13-04-2023</Fit></Clock>
    <Gap $w={14} />
    <svg width="25" height="26"><path d="M0 1h16v12H8l-3 3v-3H0z" fill="#fff" /><path d="M2.500 4h11M2.500 7h11M2.500 10h7" stroke="#1a2631" /><circle cx="15.500" cy="16.500" r="8" fill="#30363c" stroke="#8a9096" /><text x="12.300" y="21" fill="#fff" fontSize="12.500" fontFamily="Open Sans, sans-serif">1</text></svg>
    <Gap $w={3} /><Peek />
  </Taskbar>
);

export default function App() {
  return (
    <Screen>
      <Global />
      <TitleBar>
        <AppName><TableauMark s={15} /><Fit w={272} size={12} sys color="#000">Tableau - BOOK-1- Tableau licence expires in 6 days</Fit></AppName>
        <WinButton><Icon s={10} c="#000" sw={1}><path d="M0 5.500h10" /></Icon></WinButton>
        <WinButton><Icon s={11} c="#000" sw={1}><path d="M.5 2.500h8v8h-8zM2.500 2.500v-2h8v8h-2" /></Icon></WinButton>
        <WinButton><Icon s={10} c="#000" sw={1}><path d="M0 0l10 10M10 0L0 10" /></Icon></WinButton>
        <Gap $w={2} />
      </TitleBar>
      <MenuBar>{menus.map(([m, w]) => <Fit key={m} w={w} size={12} sys color="#000">{m}</Fit>)}</MenuBar>
      <Tools />
      <Main>
        <Pane />
        <Cards>
          <Card $h={62}><Fit w={34} color="#444">Pages</Fit></Card>
          <Card $h={78}><Fit w={35} color="#444">Filters</Fit></Card>
          <MarksCard />
        </Cards>
        <ViewArea />
      </Main>
      <Tabs />
      <StatusBar />
      <Windows />
    </Screen>
  );
}
